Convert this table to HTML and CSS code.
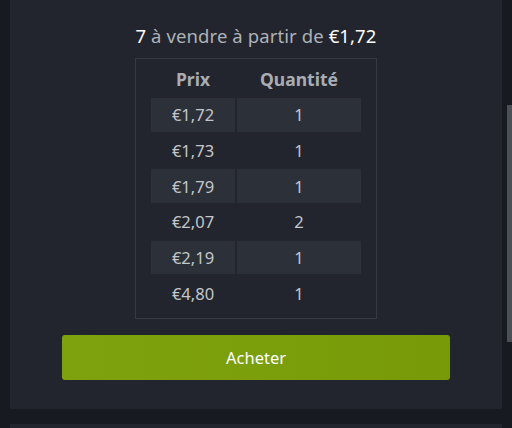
FILE: index.html
```html
<!DOCTYPE html>
<html lang="fr">
<head>
<meta charset="utf-8">
<link rel="stylesheet" href="styles.css">
</head>
<body>
<div class="page">
  <div class="column">
    <section class="panel">
      <h2 class="summary"><span class="hl">7</span> à vendre à partir de <span class="hl">€1,72</span></h2>
      <div class="orders">
        <div class="head">Prix</div>
        <div class="head">Quantité</div>
        <div class="cell alt">€1,72</div><div class="cell alt">1</div>
        <div class="cell">€1,73</div><div class="cell">1</div>
        <div class="cell alt">€1,79</div><div class="cell alt">1</div>
        <div class="cell">€2,07</div><div class="cell">2</div>
        <div class="cell alt">€2,19</div><div class="cell alt">1</div>
        <div class="cell">€4,80</div><div class="cell">1</div>
      </div>
      <button class="buy">Acheter</button>
    </section>
    <section class="panel next"></section>
  </div>
  <div class="track"><div class="thumb"></div></div>
</div>
</body>
</html>
```

FILE: styles.css
```css
html, body {
  margin: 0;
  padding: 0;
  background: #171a21;
  height: 100%;
  overflow: hidden;
}
body {
  font-family: "Noto Sans", "Open Sans", sans-serif;
}
.page {
  display: flex;
  height: 428px;
  overflow: hidden;
}
.column {
  width: 492px;
  margin-left: 10px;
  display: flex;
  flex-direction: column;
  gap: 15px;
  overflow: hidden;
}
.panel {
  background: #22252d;
  height: 409px;
  box-sizing: border-box;
  padding-top: 23px;
  display: flex;
  flex-direction: column;
  align-items: center;
  flex-shrink: 0;
}
.panel.next {
  height: 40px;
  padding: 0;
}
.summary {
  margin: 0;
  font-size: 18.5px;
  line-height: 26px;
  font-weight: normal;
  color: #acb2b8;
  height: 35px;
  letter-spacing: 0.1px;
}
.hl {
  color: #ffffff;
}
.orders {
  width: 242px;
  box-sizing: border-box;
  border: 1px solid #363942;
  padding: 0 15px 8px;
  display: grid;
  grid-template-columns: 84px 1fr;
  grid-auto-rows: 33.7px;
  gap: 2px 2px;
  grid-template-rows: 37px;
}
.head {
  display: flex;
  align-items: center;
  justify-content: center;
  font-weight: bold;
  font-size: 17.5px;
  color: #a9adb3;
  padding-top: 2px;
}
.cell {
  display: flex;
  align-items: center;
  justify-content: center;
  font-size: 16.5px;
  color: #c3c6ca;
}
.cell.alt {
  background: #2c3039;
}
.buy {
  margin-top: 16px;
  width: 388px;
  height: 45px;
  border: none;
  border-radius: 3px;
  background: linear-gradient(to right, #7ea20d, #789a08);
  color: #ffffff;
  font-family: "Noto Sans", "Open Sans", sans-serif;
  font-size: 16.5px;
  cursor: pointer;
}
.track {
  width: 10px;
  padding-top: 105px;
  display: flex;
  justify-content: flex-end;
}
.thumb {
  width: 5px;
  height: 237px;
  background: #4b4f57;
}
```
